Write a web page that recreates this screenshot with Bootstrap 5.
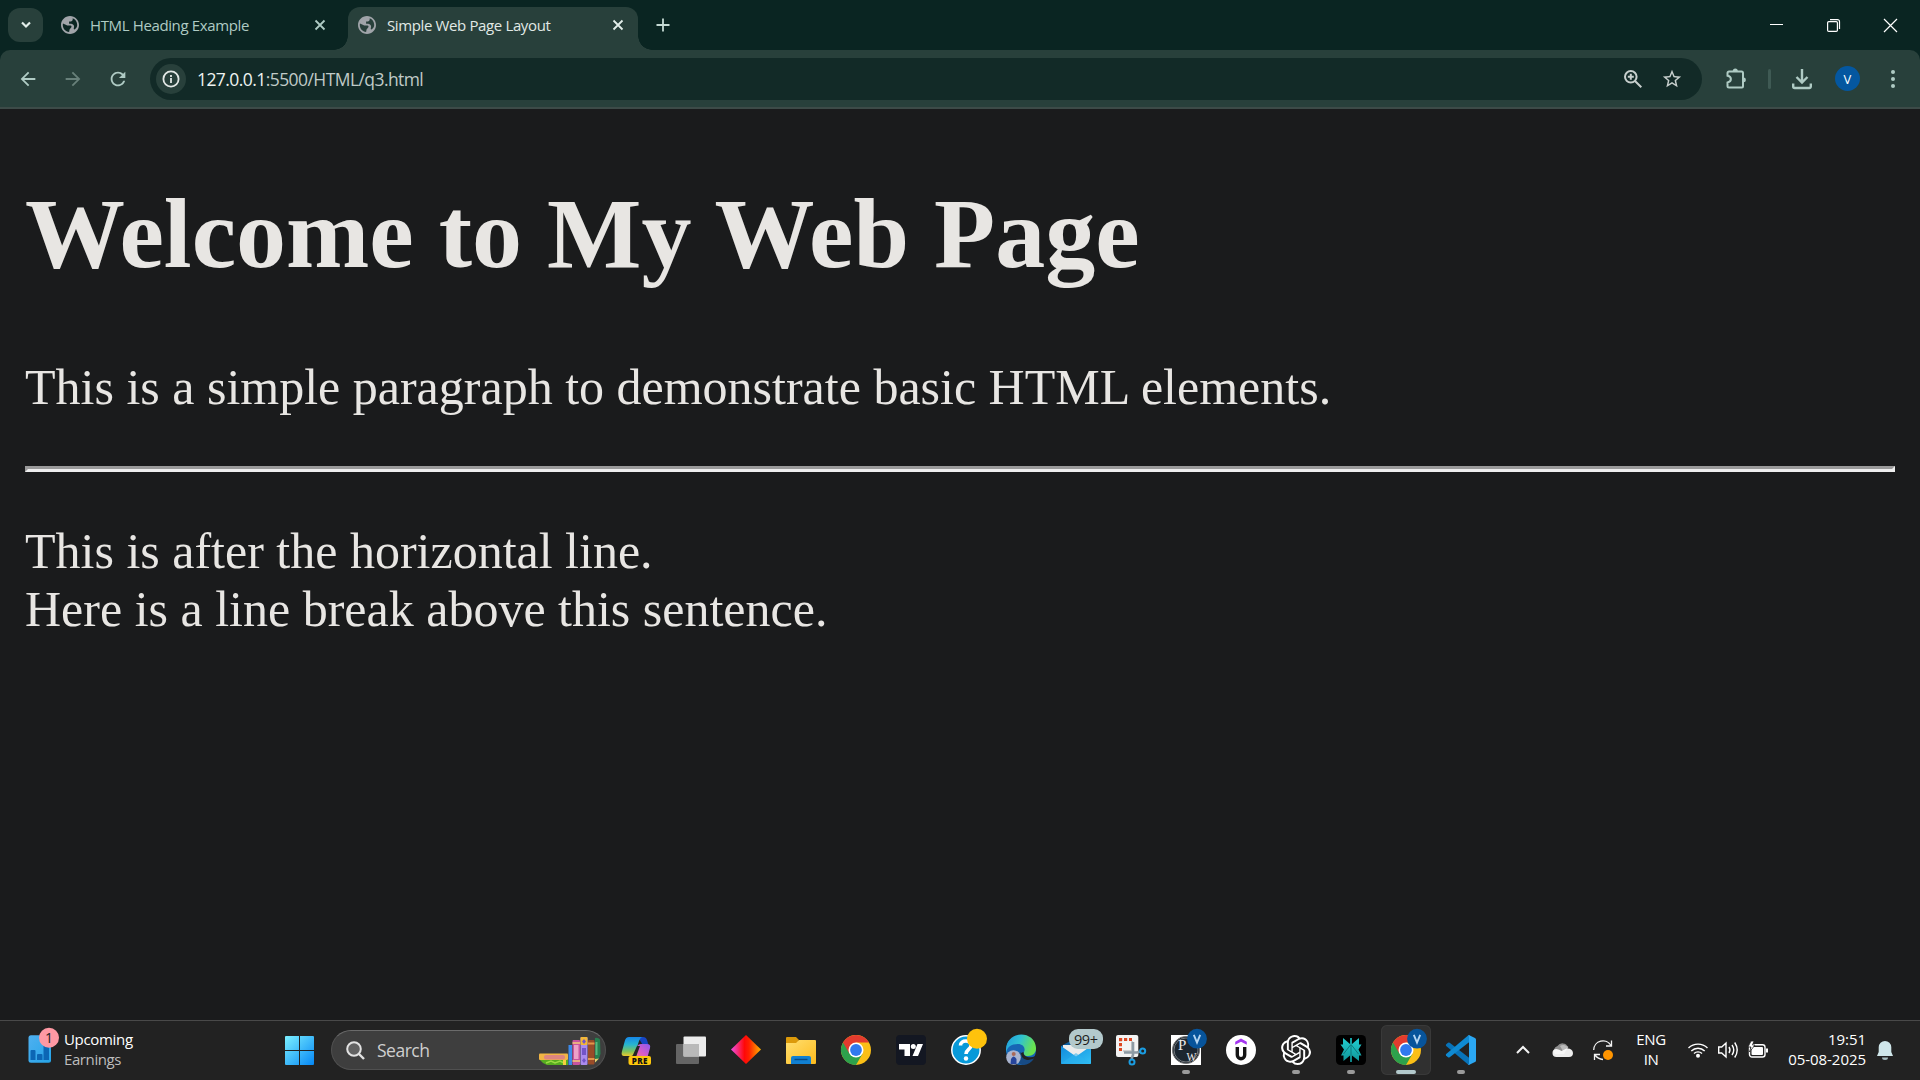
<!DOCTYPE html>
<html lang="en">
<head>
<meta charset="utf-8">
<title>Simple Web Page Layout</title>
<link href="https://cdn.jsdelivr.net/npm/bootstrap@5.3.0/dist/css/bootstrap.min.css" rel="stylesheet">
<style>
body{width:1920px;height:1080px;overflow:hidden;background:#1a1b1c;font-family:"Open Sans","Noto Sans",sans-serif;font-size:15px;line-height:20px;color:#e3e3e3}
svg{display:block;overflow:visible;flex:none}
.strip{height:50px;background:#0a2522}
.tabsearch{width:35px;height:34px;margin:8px 0 0 8px;border-radius:12px;background:#28403b}
.tabitem{height:43px;margin-top:7px;padding-bottom:7px}
.tab-a{width:305px;padding-left:18px;color:#afcbc4}
.tab-b{width:290px;padding-left:10px;background:#28403b;border-radius:12px 12px 0 0;position:relative;color:#e1e9e6}
.tab-b::before,.tab-b::after{content:"";position:absolute;bottom:0;width:14px;height:14px}
.tab-b::before{left:-14px;background:radial-gradient(circle at 0 0,transparent 13.5px,#28403b 14px)}
.tab-b::after{right:-14px;background:radial-gradient(circle at 100% 0,transparent 13.5px,#28403b 14px)}
.tabname{margin-left:11px;white-space:nowrap;letter-spacing:-.37px}
.newtab{width:50px}
.w57{width:57px}.w55{width:55px}.w45{width:45px}.w40{width:40px}.w36{width:36px}.w35{width:35px}.w30{width:30px}
.corner{background:#0a2522}
.toolbar{height:59px;background:#28403b;border-bottom:2px solid #3d4b48;border-radius:10px 10px 0 0;padding-left:5px;padding-right:10px}
.omni{width:1552px;height:42px;border-radius:21px;background:#122a27;margin-left:10px;padding:0 10px 0 6px}
.infodot{width:30px;height:30px;background:#28403b}
.url{font-size:17.5px;margin-left:11px;letter-spacing:-.57px;color:#c0cbc8}
.url span{color:#eef3f1}
.ext{margin-left:16px}
.sep{width:3px;height:20px;background:#3f5a54;border-radius:2px}
.avatar{width:25px;height:25px;background:#0457a0;color:#fff;font-size:13px}
.doc{height:911px;padding:0 25px;font-family:"Liberation Serif",serif;font-size:50px;line-height:58px;color:#e8e6e3}
.doc h1{font-size:100px;font-weight:700;line-height:115px;margin:0 0 67px;padding-top:67px}
.doc p{margin:0 0 50px}
.doc hr{margin:0 0 50px;opacity:1;border:3px solid;border-color:#9a9a9a #eee #eee #9a9a9a;height:6px}
.taskbar{height:60px;background:#222;box-shadow:inset 0 1px #494949}
.widget{width:274px;padding-left:14px}
.wtext,.lang,.clock{padding-bottom:3px}
.l1{color:#fff;letter-spacing:-.32px}.l2{color:#bdbdbd;letter-spacing:-.4px}
.find{width:275px;height:40px;margin:0 5px 0 7px;border-radius:20px;background:#3e3e3e;border:1px solid #505050;border-top-color:#6b6b6b;padding-left:14px;padding-right:4px;font-size:17.5px;color:#cfcfcf}
.find span{margin-left:12px;letter-spacing:-.5px}
.apps{gap:5px}
.app{width:50px;height:50px;position:relative}
.app.on{background:#303030;border-radius:6px;box-shadow:inset 0 0 0 1px #393939}
.run::after{content:"";position:absolute;left:21px;bottom:1px;width:8px;height:4px;border-radius:2px;background:#9a9a9a}
.app.on::after{left:15px;width:20px;background:#b3c9cc}
.lang{width:56px;color:#fff;letter-spacing:-.4px}
.net{margin-left:4px}
.clock{width:93px;color:#fff;letter-spacing:-.04px}
.bell{width:38px}
.tray{padding-right:16px}
</style>
<script src="https://cdn.jsdelivr.net/npm/bootstrap@5.3.0/dist/js/bootstrap.bundle.min.js"></script>
</head>
<body>
<svg width="0" height="0" class="position-absolute"><defs>
<path id="globe" d="M12 2C6.48 2 2 6.48 2 12s4.48 10 10 10 10-4.48 10-10S17.52 2 12 2zM11 19.9c-4-.5-7-3.85-7-7.9 0-.62.08-1.2.2-1.8L9 12.500h3.500c1 0 1.500 1 1 2l-2 2.500zM17 17c-1-.2-1-1.500-.5-2.500.5-2-1-3.500-3-4h-2.500V8h2c1 0 2-1 2-2V4.600c3 1.200 5 4 5 7.400 0 2-1 3.800-3 5z"/>
<linearGradient id="gWin" x1="0" y1="0" x2="1" y2="1"><stop stop-color="#7cf0ff"/><stop offset="1" stop-color="#0587f5"/></linearGradient>
<linearGradient id="gCopA" x1="0" y1="0" x2="0" y2="1"><stop stop-color="#1687e8"/><stop offset=".4" stop-color="#27b5d0"/><stop offset=".75" stop-color="#7cc35c"/><stop offset="1" stop-color="#eec92c"/></linearGradient>
<linearGradient id="gCopB" x1="1" y1="0" x2="0" y2="1"><stop stop-color="#8a5bf0"/><stop offset=".5" stop-color="#d75bc8"/><stop offset="1" stop-color="#ff9068"/></linearGradient>
<linearGradient id="gDia"><stop stop-color="#ee50e8"/><stop offset=".45" stop-color="#ff0808"/><stop offset=".6" stop-color="#ff2000"/><stop offset="1" stop-color="#ffb400"/></linearGradient>
<linearGradient id="gFold" x1="0" y1="0" x2="1" y2="1"><stop stop-color="#ffdf70"/><stop offset="1" stop-color="#fdbb1d"/></linearGradient>
<linearGradient id="gEdge" x1="0" y1="0" x2="1" y2=".3"><stop stop-color="#209bdc"/><stop offset=".5" stop-color="#2fc1d3"/><stop offset="1" stop-color="#6ae34f"/></linearGradient>
<linearGradient id="gMail" x1="0" y1="0" x2="1" y2="1"><stop stop-color="#128bdc"/><stop offset="1" stop-color="#32c1f5"/></linearGradient>
<linearGradient id="gPer" x1="0" y1="0" x2="0" y2="1"><stop stop-color="#22ced1"/><stop offset="1" stop-color="#0f9498"/></linearGradient>
<linearGradient id="gWid" x1="0" y1="0" x2="1" y2="1"><stop stop-color="#4fb0f0"/><stop offset="1" stop-color="#25a4e8"/></linearGradient>
<g id="chrome"><circle cx="25" cy="25" r="15" fill="#fbbf16"/><path d="M25 25L12 17.500A15 15 0 0 0 25 40L31.500 28.700z" fill="#2da14c"/><path d="M12 17.500A15 15 0 0 1 38 17.500H25L18.500 28.800z" fill="#e33b2e"/><circle cx="25" cy="25" r="7.500" fill="#fff"/><circle cx="25" cy="25" r="5.900" fill="#3079ee"/></g>
<g id="vbadge"><circle cx="36" cy="13.700" r="9.900" fill="#07549b"/><path d="M32.800 9.800L36 17.600 39.200 9.800" fill="none" stroke="#b4d5f2" stroke-width="1.900"/></g>
</defs></svg>

<div class="strip d-flex">
  <div class="tabsearch d-flex align-items-center justify-content-center"><svg width="12" height="8" fill="none" stroke="#e3eeea" stroke-width="2.200"><path d="M2 1.500l4 4 4-4"/></svg></div>
  <div class="tabitem tab-a d-flex align-items-center">
    <svg width="18" height="18" viewBox="2 2 20 20" fill="#a0a4a9"><use href="#globe"/></svg><span class="tabname">HTML Heading Example</span>
    <svg class="ms-auto" style="margin-right:23px" width="10" height="10" stroke="#afcbc4" stroke-width="1.800"><path d="M.5.5l9 9M9.500.5l-9 9"/></svg>
  </div>
  <div class="tabitem tab-b d-flex align-items-center">
    <svg width="18" height="18" viewBox="2 2 20 20" fill="#a0a4a9"><use href="#globe"/></svg><span class="tabname">Simple Web Page Layout</span>
    <svg class="ms-auto" style="margin-right:15px" width="10" height="10" stroke="#e3eeea" stroke-width="1.800"><path d="M.5.5l9 9M9.500.5l-9 9"/></svg>
  </div>
  <div class="newtab d-flex align-items-center justify-content-center"><svg width="14" height="14" stroke="#c5dad4" stroke-width="1.800"><path d="M7 .5v13M.5 7h13"/></svg></div>
  <div class="d-flex ms-auto align-items-center pe-1">
    <div class="w57 d-flex justify-content-center"><svg width="7" height="13" stroke="#fff" stroke-width="1"><path d="M0 5.500h13"/></svg></div>
    <div class="w57 d-flex justify-content-center"><svg width="7" height="13" fill="none" stroke="#fff" stroke-width="1.200"><rect x=".6" y="2.600" width="9.800" height="9.800" rx="1.200"/><path d="M3 .6h7.500a2 2 0 0 1 2 2V10"/></svg></div>
    <div class="w57 d-flex justify-content-center"><svg width="7" height="13" stroke="#fff" stroke-width="1.200"><path d="M0 0l13 13M13 0L0 13"/></svg></div>
  </div>
</div>

<div class="corner"><div class="toolbar d-flex align-items-center">
  <div class="w45 d-flex justify-content-center"><svg width="22" height="22" viewBox="0 0 24 24" fill="#afcbc4"><path d="M20 11H7.830l5.590-5.590L12 4l-8 8 8 8 1.410-1.410L7.830 13H20v-2z"/></svg></div>
  <div class="w45 d-flex justify-content-center"><svg width="22" height="22" viewBox="0 0 24 24" fill="#68807a"><path d="M4 11h12.170l-5.590-5.590L12 4l8 8-8 8-1.410-1.410L16.170 13H4z"/></svg></div>
  <div class="w45 d-flex justify-content-center"><svg width="22" height="22" viewBox="0 0 24 24" fill="#afcbc4"><path d="M17.650 6.350C16.200 4.900 14.210 4 12 4c-4.420 0-7.990 3.580-7.990 8s3.570 8 7.990 8c3.730 0 6.840-2.550 7.730-6h-2.080c-.82 2.330-3.040 4-5.650 4-3.310 0-6-2.690-6-6s2.690-6 6-6c1.660 0 3.140.69 4.220 1.780L13 11h7V4l-2.350 2.350z"/></svg></div>
  <div class="omni d-flex align-items-center">
    <div class="infodot rounded-circle d-flex align-items-center justify-content-center"><svg width="18" height="18" fill="none" stroke="#e3e8e6" stroke-width="1.800"><circle cx="9" cy="9" r="7.600"/><path d="M9 8v5M9 5v2"/></svg></div>
    <div class="url"><span>127.0.0.1</span>:5500/HTML/q3.html</div>
    <div class="w40 ms-auto d-flex justify-content-center"><svg width="17" height="18" fill="none" stroke="#c7cfcd" stroke-width="2"><circle cx="6.800" cy="6.800" r="5.800"/><path d="M11 11l6.300 6.300M3.800 6.800h6M6.800 3.800v6"/></svg></div>
    <div class="w40 d-flex justify-content-center"><svg width="22" height="22" viewBox="0 0 24 24" fill="#c7cfcd"><path d="M22 9.240l-7.190-.62L12 2 9.190 8.630 2 9.240l5.460 4.730L5.820 21 12 17.270 18.180 21l-1.630-7.030L22 9.240zM12 15.400l-3.760 2.270 1-4.280-3.320-2.880 4.380-.38L12 6.100l1.710 4.040 4.380.38-3.320 2.880 1 4.280L12 15.400z"/></svg></div>
  </div>
  <div class="ext w36 d-flex justify-content-center"><svg width="20" height="20" fill="none" stroke="#afcbc4" stroke-width="2"><path d="M3 2.500h12.500a1.500 1.500 0 0 1 1.500 1.500v13.500a1 1 0 0 1-1 1H3a1.500 1.500 0 0 1-1.500-1.500v-3.500c4.500-.8 4.500-6 0-6.800V4A1.500 1.500 0 0 1 3 2.500z"/><path d="M6.800 2a2.500 2.500 0 0 1 5 0zM17.500 8.500a2.400 2.400 0 0 1 0 4.800z" fill="#afcbc4" stroke="none"/></svg></div>
  <div class="w30 d-flex justify-content-center"><div class="sep"></div></div>
  <div class="w36 d-flex justify-content-center"><svg width="20" height="20" fill="none" stroke="#afcbc4" stroke-width="2.400"><path d="M10 0v13M4.500 8l5.500 5.500L15.500 8M1.200 14.500v3a1.500 1.500 0 0 0 1.500 1.500h14.600a1.500 1.500 0 0 0 1.500-1.500v-3"/></svg></div>
  <div class="w55 d-flex justify-content-center"><div class="avatar rounded-circle d-flex align-items-center justify-content-center">V</div></div>
  <div class="w35 d-flex justify-content-center"><svg width="4" height="18" fill="#afcbc4"><circle cx="2" cy="2" r="2"/><circle cx="2" cy="9" r="2"/><circle cx="2" cy="16" r="2"/></svg></div>
</div></div>

<main class="doc">
  <h1>Welcome to My Web Page</h1>
  <p>This is a simple paragraph to demonstrate basic HTML elements.</p>
  <hr>
  <p>This is after the horizontal line.<br>Here is a line break above this sentence.</p>
</main>

<footer class="taskbar d-flex align-items-center">
  <div class="widget d-flex align-items-center">
    <svg width="50" height="50"><rect x="14.500" y="10.300" width="22.500" height="27.500" rx="2.500" fill="url(#gWid)"/><path d="M16.500 35v-9a1 1 0 0 1 1-1h3a1 1 0 0 1 1 1v9zM23 35v-5a1 1 0 0 1 1-1h3.500a1 1 0 0 1 1 1v5zM29.500 35V21h5.500v14z" fill="#0c66b4"/><circle cx="35" cy="12.800" r="10" fill="#ff99a4"/><text x="35" y="18" text-anchor="middle" font-size="14" fill="#222">1</text></svg>
    <div class="wtext"><div class="l1">Upcoming</div><div class="l2">Earnings</div></div>
  </div>
  <div class="app"><svg width="50" height="50" fill="url(#gWin)"><path d="M11 12a1 1 0 0 1 1-1h13v14H11zM26 11h13a1 1 0 0 1 1 1v13H26zM11 26h14v14H12a1 1 0 0 1-1-1zM26 26h14v13a1 1 0 0 1-1 1H26z"/></svg></div>
  <div class="find d-flex align-items-center">
    <svg width="19" height="19" fill="#626262" stroke="#e2e2e2" stroke-width="2"><circle cx="8" cy="8" r="6.800"/><path d="M13 13l5 5" stroke-width="2.400"/></svg>
    <span>Search</span>
    <svg class="ms-auto" width="62" height="26">
      <rect x="0" y="16.500" width="29" height="6.500" rx="1" fill="#f2b544"/><rect x="5" y="18" width="21" height="4.500" rx="2" fill="#de8580"/><path d="M1 23h28v5H8q-4-1-7-5z" fill="#56ac20"/><path d="M7 26l5-2 4 2 5-2 4 2" stroke="#9bdc43" stroke-width="1.500" fill="none"/><path d="M24 23h3v5h-3z" fill="#f5d03f"/>
      <rect x="29.500" y="8" width="3.500" height="20" fill="#3c8aea"/><rect x="33.500" y="3" width="7.500" height="25" rx="1" fill="#c7549f"/><rect x="35" y="8" width="4.500" height="14" fill="#eda0c8"/><path d="M33.500 6h7.500M33.500 24h7.500" stroke="#f3cc78" stroke-width="1.500"/>
      <rect x="41.500" y="0" width="7" height="28" rx="1" fill="#aa8bed"/><rect x="41.500" y="0" width="7" height="8" rx="1" fill="#f3b837"/><path d="M45 2l2 2.500-2 2.500-2-2.500zM43 11h4v7h-4zM45 21l2 2.500-2 2.500-2-2.500z" fill="#7354c8"/>
      <rect x="49" y="3" width="6.500" height="24.500" rx="1" fill="#9a4c28"/><path d="M49 6.500h6.500M49 22h6.500" stroke="#e49648" stroke-width="2"/><path d="M56 1q3-1 5 1.500l.5 14q-1 6-5.500 9z" fill="#287f4f"/><path d="M57.500 5v13" stroke="#59b67f" stroke-width="2"/><path d="M56 22l4-.5-4 4z" fill="#f1cf72"/>
    </svg>
  </div>
  <div class="apps d-flex">
    <div class="app"><svg width="50" height="50"><path d="M27 12h5q3 0 4 3l1.200 4h-6z" fill="#1746c4"/><path d="M18 12h13q-2 1-3 4l-4 12q-1 3-4 3h-7q-3 0-2.200-4l3-11q1-4 4.200-4z" fill="url(#gCopA)"/><path d="M30 19h6q4 0 3 4l-3 11H20q2-1 3-4l3-8q1-3 4-3z" fill="url(#gCopB)"/><path d="M26 21h3l-4 11h-4z" fill="#252525"/><rect x="17.500" y="31" width="22.500" height="9" rx="2" fill="#fdc70c"/><text x="28.800" y="38.500" text-anchor="middle" font-size="8" font-weight="800" fill="#111" letter-spacing=".4">PRE</text></svg></div>
    <div class="app"><svg width="50" height="50"><rect x="10" y="19" width="23" height="20" rx="1" fill="#656565"/><rect x="17.500" y="11.500" width="22.500" height="20" rx="1" fill="#ececec"/><path d="M17.500 19H33v12.500H17.500z" fill="#b9b9b9"/></svg></div>
    <div class="app"><svg width="50" height="50"><path d="M25 10l15 14.500L25 39 10 24.500z" fill="url(#gDia)"/></svg></div>
    <div class="app"><svg width="50" height="50"><path d="M10 13a1 1 0 0 1 1-1h9l3 3-3 5H10z" fill="#dc9a0a"/><path d="M10 18h10l3-3h16a1 1 0 0 1 1 1v22a1 1 0 0 1-1 1H11a1 1 0 0 1-1-1z" fill="url(#gFold)"/><path d="M15 39v-6a2 2 0 0 1 2-2h16a2 2 0 0 1 2 2v6z" fill="#1180d2"/><path d="M18.500 34.500h13" stroke="#084a86" stroke-width="1.400"/></svg></div>
    <div class="app"><svg width="50" height="50"><use href="#chrome"/></svg></div>
    <div class="app"><svg width="50" height="50"><rect x="10" y="10" width="30" height="30" rx="4" fill="#131722"/><path d="M13 19h11v12h-5.500v-6.500H13zM31.500 19H37l-5 12h-5.500z" fill="#fff"/><circle cx="27.300" cy="21.500" r="2.500" fill="#fff"/></svg></div>
    <div class="app"><svg width="50" height="50"><circle cx="25" cy="25" r="14.200" fill="#0799d9" stroke="#fff" stroke-width="1.500"/><path d="M19.500 20.500c0-6 10.500-6 10.500 0 0 4-5 4-5 8.500" fill="none" stroke="#fff" stroke-width="3.600"/><circle cx="25" cy="33.500" r="2.200" fill="#fff"/><circle cx="36" cy="13.700" r="10" fill="#ffc20c"/></svg></div>
    <div class="app"><svg width="50" height="50"><circle cx="25" cy="25" r="15" fill="#1765b5"/><path d="M10 24C11 5 39 5 40 23c.3 5-3 8-8 8-4 0-5-2-4-4 2-4-1-8-6-8-7 0-11 3-12 9z" fill="url(#gEdge)"/><path d="M25 27q-1 8 7 8 3.500 0 6-1.500Q34 40 27 39.900q-6-1-6-8 0-4 4-4.900z" fill="#174b85"/><path d="M25 28q0 6 6 7 4 .5 7.500-2l1-2q-4 2-8 1-4-1-4-5z" fill="#222"/><circle cx="17.500" cy="32.500" r="7.300" fill="#a9b4cf"/><circle cx="17.700" cy="29" r="2" fill="#a86958"/><path d="M14.500 39l.5-5q2.500-5 5.500 0v5z" fill="#27459c"/></svg></div>
    <div class="app"><svg width="50" height="50"><path d="M10 21l15-8 15 8v18H10z" fill="#0b5c9c"/><path d="M12 20h26v8l-13 7-13-7z" fill="#ececec"/><path d="M10 21l15 10.500L40 21v17a1 1 0 0 1-1 1H11a1 1 0 0 1-1-1z" fill="url(#gMail)"/><path d="M10 38.500l15-10.500 15 10.500z" fill="#2bb3ef" opacity=".55"/><rect x="18" y="4" width="34" height="20" rx="9" fill="#b3c9cc"/><text x="35" y="19.500" text-anchor="middle" font-size="14.500" fill="#1d1d1d" textLength="24">99+</text></svg></div>
    <div class="app"><svg width="50" height="50"><rect x="10" y="10" width="22.300" height="22" rx="2" fill="#f3f3f3"/><path d="M13 14.500h13M14.500 13v13" stroke="#dc4620" stroke-width="3" stroke-dasharray="3.200 1.800" fill="none"/><path d="M17 26h9V16" fill="none" stroke="#c3c3c3" stroke-width="1.500"/><path d="M27 17v13l-1.500 4M18 27.500h13l3-1" fill="none" stroke="#8d9aa4" stroke-width="2.600"/><circle cx="36.700" cy="26" r="2.500" fill="none" stroke="#1b9de2" stroke-width="2"/><circle cx="26" cy="37" r="2.500" fill="none" stroke="#1b9de2" stroke-width="2"/></svg></div>
    <div class="app run"><svg width="50" height="50"><path d="M10 10h30v30H10z" fill="#fff"/><circle cx="25" cy="25" r="13.600" fill="#1c2630" stroke="#777" stroke-width="1"/><circle cx="25" cy="25" r="12" fill="none" stroke="#aaa" stroke-width=".6"/><text x="17" y="25" font-family="Liberation Serif" font-size="15" fill="#e9e9e9">P</text><text x="25.500" y="36" font-family="Liberation Serif" font-size="13" fill="#e9e9e9" textLength="10" lengthAdjust="spacingAndGlyphs">W</text><use href="#vbadge"/></svg></div>
    <div class="app"><svg width="50" height="50"><circle cx="25" cy="25" r="15" fill="#fff"/><path d="M19.200 18.200v-1.500L25 13.500l5.800 3.200v3L25 16.700l-5.800 3z" fill="#a435f0"/><path d="M21.300 22v8a3.700 3.700 0 0 0 7.400 0v-8" fill="none" stroke="#151515" stroke-width="3.400"/></svg></div>
    <div class="app run"><svg width="50" height="50"><path transform="translate(10 10) scale(1.250)" fill="#fff" d="M22.2819 9.8211a5.9847 5.9847 0 0 0-.5157-4.9108 6.0462 6.0462 0 0 0-6.5098-2.9A6.0651 6.0651 0 0 0 4.9807 4.1818a5.9847 5.9847 0 0 0-3.9977 2.9 6.0462 6.0462 0 0 0 .7427 7.0966 5.98 5.98 0 0 0 .511 4.9107 6.051 6.051 0 0 0 6.5146 2.9001A5.9847 5.9847 0 0 0 13.2599 24a6.0557 6.0557 0 0 0 5.7718-4.2058 5.9894 5.9894 0 0 0 3.9977-2.9001 6.0557 6.0557 0 0 0-.7475-7.0729zm-9.022 12.6081a4.4755 4.4755 0 0 1-2.8764-1.0408l.1419-.0804 4.7783-2.7582a.7948.7948 0 0 0 .3927-.6813v-6.7369l2.02 1.1686a.071.071 0 0 1 .038.052v5.5826a4.504 4.504 0 0 1-4.4945 4.4944zm-9.6607-4.1254a4.4708 4.4708 0 0 1-.5346-3.0137l.142.0852 4.783 2.7582a.7712.7712 0 0 0 .7806 0l5.8428-3.3685v2.3324a.0804.0804 0 0 1-.0332.0615L9.74 19.9502a4.4992 4.4992 0 0 1-6.1408-1.6464zM2.3408 7.8956a4.485 4.485 0 0 1 2.3655-1.9728V11.6a.7664.7664 0 0 0 .3879.6765l5.8144 3.3543-2.0201 1.1685a.0757.0757 0 0 1-.071 0l-4.8303-2.7865A4.504 4.504 0 0 1 2.3408 7.872zm16.5963 3.8558L13.1038 8.364 15.1192 7.2a.0757.0757 0 0 1 .071 0l4.8303 2.7913a4.4944 4.4944 0 0 1-.6765 8.1042v-5.6772a.79.79 0 0 0-.407-.667zm2.0107-3.0231l-.142-.0852-4.7735-2.7818a.7759.7759 0 0 0-.7854 0L9.409 9.2297V6.8974a.0662.0662 0 0 1 .0284-.0615l4.8303-2.7866a4.4992 4.4992 0 0 1 6.6802 4.66zM8.3065 12.863l-2.02-1.1638a.0804.0804 0 0 1-.038-.0567V6.0742a4.4992 4.4992 0 0 1 7.3757-3.4537l-.142.0805L8.704 5.459a.7948.7948 0 0 0-.3927.6813zm1.0976-2.3654l2.602-1.4998 2.6069 1.4998v2.9994l-2.5974 1.4997-2.6067-1.4997Z"/></svg></div>
    <div class="app run"><svg width="50" height="50"><rect x="10" y="10" width="30" height="30" rx="4.500" fill="#000"/><path d="M17 13l7 6v-6h2v6l7-6v6.500h2.500L32.500 24.500l3 6H33V36l-7-5.500V37h-2v-6.500L17.500 36v-5.500H15l3-6-3.500-5H17z" fill="url(#gPer)"/><path d="M25 13v24M24.500 20l-7 9M25.500 20l7 9" stroke="#0a6a6c" stroke-width=".8"/></svg></div>
    <div class="app run on"><svg width="50" height="50"><use href="#chrome"/><use href="#vbadge"/></svg></div>
    <div class="app run"><svg width="50" height="50"><path d="M10 19.500l2-1.800q.8-.6 1.700 0L34 33.500v6L31.500 39 10.200 20.900q-.7-.7-.2-1.400z" fill="#0873b9"/><path d="M10 30.500l2 1.800q.8.600 1.700 0L34 16.500v-6L31.500 11 10.200 29.100q-.7.700-.2 1.400z" fill="#0f8ad2"/><path d="M31.500 10.200q.8-.4 1.800 0l5.700 2.700q1 .5 1 1.600v21q0 1.100-1 1.600l-5.700 2.700q-1 .4-1.800-.2 1 .2 1.500-1V11.400q-.5-1.200-1.500-1.200z" fill="#2ba7f2"/></svg></div>
  </div>
  <div class="tray ms-auto d-flex align-items-center">
    <div class="w40 d-flex justify-content-center"><svg width="14" height="8" fill="none" stroke="#f3f3f3" stroke-width="2"><path d="M1 7l6-6 6 6"/></svg></div>
    <div class="w40 d-flex justify-content-center"><svg width="20" height="14"><path d="M2 11a5 5 0 0 1 2.500-8A6 6 0 0 1 15 4l-4 7z" fill="#8f8f8f"/><path d="M7 3a6 6 0 0 1 8.500 2L10 8z" fill="#bbb"/><path d="M3.500 14a4 4 0 0 1 0-8q3 .3 5 2l5-2.500q6-.5 6.500 4.500 0 4-4 4z" fill="#fff" opacity=".92"/></svg></div>
    <div class="w40 d-flex justify-content-center"><svg width="20" height="20" fill="none" stroke="#f3f3f3" stroke-width="1.300"><path d="M.7 10A9.300 9.300 0 0 1 18 5.500M18.500.5v5.500H13M1.500 20v-5.500H7M2 15q3 4 8 4.500"/><circle cx="15" cy="15" r="5" fill="#ff9500" stroke="none"/></svg></div>
    <div class="lang text-center"><div>ENG</div><div>IN</div></div>
    <div class="net w30 d-flex justify-content-center"><svg width="20" height="16" fill="none" stroke="#fff" stroke-width="1.400"><path d="M.5 6a13.500 13.500 0 0 1 19 0M3.300 9a9.500 9.500 0 0 1 13.400 0M6 11.600a5.600 5.600 0 0 1 8 0"/><circle cx="10" cy="13.700" r="2" fill="#fff" stroke="none"/></svg></div>
    <div class="w30 d-flex justify-content-center"><svg width="20" height="18" fill="none" stroke="#fff" stroke-width="1.400"><path d="M.7 6h3L8 2v14l-4.300-4h-3zM11 6q2 3 0 6M14 4q3.500 5 0 10M16.700 1.500q5 7.500 0 15"/></svg></div>
    <div class="w30 d-flex justify-content-center"><svg width="20" height="16"><rect x="1.500" y="2.700" width="15.500" height="12.300" rx="2.500" fill="none" stroke="#fff" stroke-width="1.400"/><rect x="3.500" y="5" width="11.500" height="8" rx="1" fill="#fff"/><path d="M18 6.500h2v4h-2z" fill="#fff"/><path d="M3-1L0 5h3L1.500 10 7 3H4.500L6-1z" fill="#fff" stroke="#222" stroke-width=".8"/></svg></div>
    <div class="clock text-end"><div>19:51</div><div>05-08-2025</div></div>
    <div class="bell d-flex justify-content-center"><svg width="16" height="19" fill="#cfe6ea"><path d="M8 0a6.300 6.300 0 0 1 6.300 6.300V11l1.700 4H0l1.700-4V6.300A6.300 6.300 0 0 1 8 0z"/><path d="M5 16.500h6a3 2.500 0 0 1-6 0z" fill="#a7bcc0"/></svg></div>
  </div>
</footer>
</body>
</html>
